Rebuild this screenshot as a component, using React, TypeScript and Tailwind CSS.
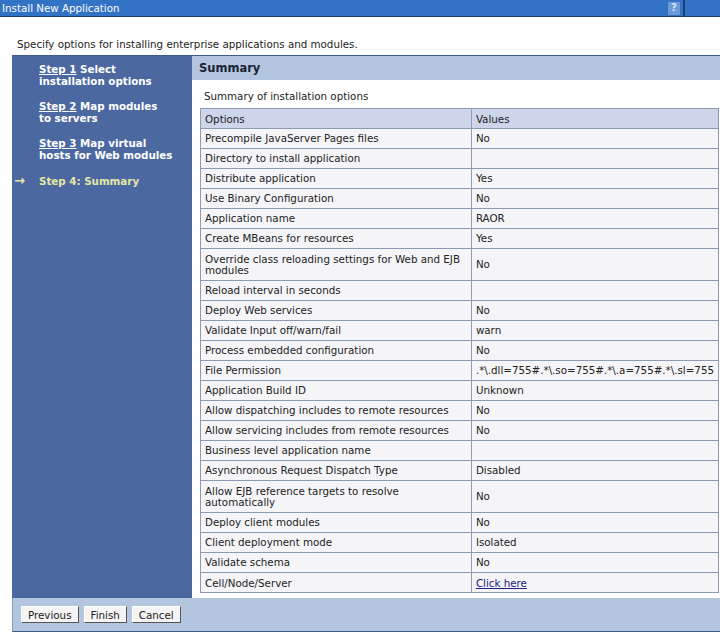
const rows: [string, string, boolean?][] = [
  ["Precompile JavaServer Pages files", "No"],
  ["Directory to install application", ""],
  ["Distribute application", "Yes"],
  ["Use Binary Configuration", "No"],
  ["Application name", "RAOR"],
  ["Create MBeans for resources", "Yes"],
  ["Override class reloading settings for Web and EJB modules", "No", true],
  ["Reload interval in seconds", ""],
  ["Deploy Web services", "No"],
  ["Validate Input off/warn/fail", "warn"],
  ["Process embedded configuration", "No"],
  ["File Permission", ".*\\.dll=755#.*\\.so=755#.*\\.a=755#.*\\.sl=755"],
  ["Application Build ID", "Unknown"],
  ["Allow dispatching includes to remote resources", "No"],
  ["Allow servicing includes from remote resources", "No"],
  ["Business level application name", ""],
  ["Asynchronous Request Dispatch Type", "Disabled"],
  ["Allow EJB reference targets to resolve automatically", "No", true],
  ["Deploy client modules", "No"],
  ["Client deployment mode", "Isolated"],
  ["Validate schema", "No"],
];

const Step = ({ n, first, second }: { n: number; first: string; second: string }) => (
  <div className="pl-[27px] leading-[12px] text-white whitespace-nowrap">
    <span className="underline">Step {n}</span> {first}
    <br />
    {second}
  </div>
);

export default function App() {
  return (
    <div className="w-[720px] h-[636px] bg-white text-[10.3px] leading-[12px] text-[#222] font-['Tahoma','DejaVu_Sans',sans-serif] overflow-hidden">
      <div className="h-[17px] bg-[#3373c6] border-b border-[#1d3f70] flex items-center text-white">
        <div className="pl-[2px] flex-1 leading-[16px]">Install New Application</div>
        <div className="w-[12px] h-[13px] bg-[#6c9ad6] text-[#d8e6f8] text-[10px] font-bold flex items-center justify-center mr-[3px]">?</div>
        <div className="w-[2px] h-full bg-[#1d3f70] mr-[35px]" />
      </div>

      <div className="pl-[17px] pt-[21px] h-[38px]">Specify options for installing enterprise applications and modules.</div>

      <div className="ml-[12px] border-t border-[#3c5a8c]">
        <div className="flex">
          <div className="w-[180px] shrink-0 bg-[#4b68a0] font-bold pt-[7px] flex flex-col gap-[13px]">
            <Step n={1} first="Select" second="installation options" />
            <Step n={2} first="Map modules" second="to servers" />
            <Step n={3} first="Map virtual" second="hosts for Web modules" />
            <div className="flex text-[#e6e6a6] pt-[1px]">
              <span className="w-[27px] pl-[2px] text-[13px] leading-[12px]">→</span>
              <span>Step 4: Summary</span>
            </div>
          </div>

          <div className="flex-1 bg-white pb-[5px]">
            <div className="h-[24px] bg-[#b4c5df] flex items-center pl-[7px] font-bold text-[11.5px] text-[#1a2333]">Summary</div>
            <div className="pl-[12px] pt-[10px] h-[28px]">Summary of installation options</div>
            <table className="ml-[8px] w-[519px] border-collapse">
              <tbody>
                <tr className="h-[20px] bg-[#cdd5ea]">
                  <td className="w-[271px] border border-[#8e9ab4] px-[4px]">Options</td>
                  <td className="border border-[#8e9ab4] px-[4px]">Values</td>
                </tr>
                {rows.map(([o, v, tall]) => (
                  <tr key={o} className={tall ? "h-[32px] bg-[#f5f5f8]" : "h-[20px] bg-[#f5f5f8]"}>
                    <td className="border border-[#8e9ab4] px-[4px] leading-[11px]">{o}</td>
                    <td className="border border-[#8e9ab4] px-[4px] leading-[11px] whitespace-nowrap">{v}</td>
                  </tr>
                ))}
                <tr className="h-[20px] bg-[#f5f5f8]">
                  <td className="border border-[#8e9ab4] px-[4px]">Cell/Node/Server</td>
                  <td className="border border-[#8e9ab4] px-[4px]">
                    <span className="underline text-[#202080]">Click here</span>
                  </td>
                </tr>
              </tbody>
            </table>
          </div>
        </div>

        <div className="h-[34px] bg-[#b4c5df] border-b border-[#3c5a8c] border-l border-l-[#8e9ab4] flex items-center gap-[5px] pl-[8px]">
          {["Previous", "Finish", "Cancel"].map((b) => (
            <button key={b} className="h-[17px] px-[6px] bg-[#f4f4f4] border border-[#fff] border-r-[#555] border-b-[#555] text-[10.3px] leading-[14px] text-[#222]">
              {b}
            </button>
          ))}
        </div>
      </div>
    </div>
  );
}
